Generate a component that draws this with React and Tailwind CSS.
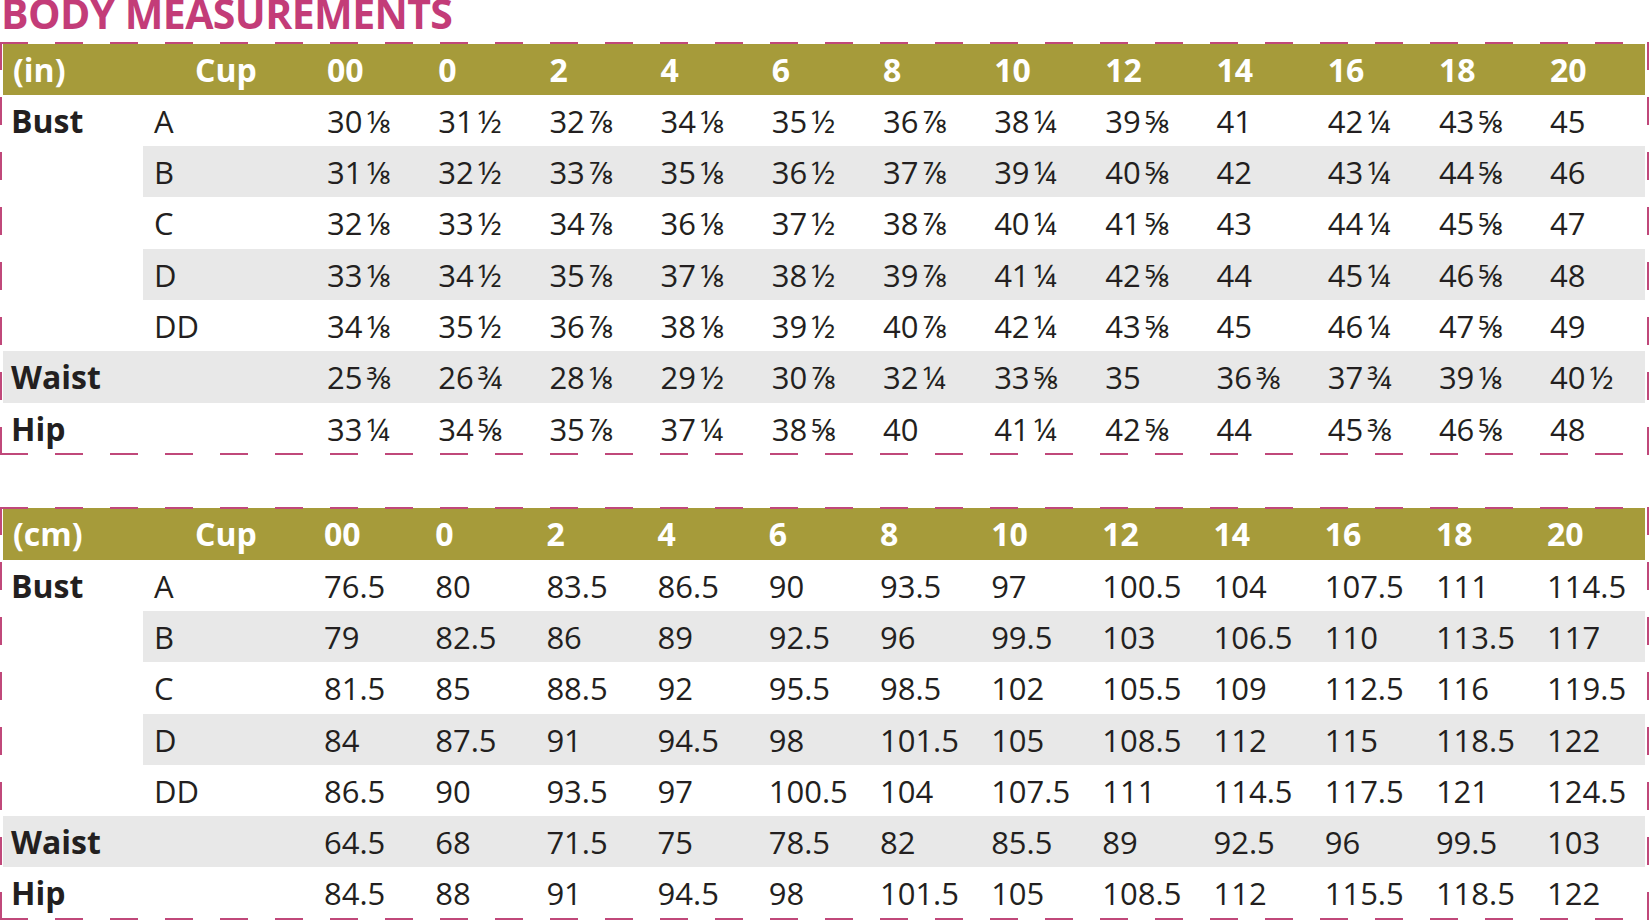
import React from 'react';

const SIZES = ['00', '0', '2', '4', '6', '8', '10', '12', '14', '16', '18', '20'];

const INCH_ROWS = [
  { label: 'Bust', cup: 'A', shade: 'none', values: ['30⅛', '31½', '32⅞', '34⅛', '35½', '36⅞', '38¼', '39⅝', '41', '42¼', '43⅝', '45'] },
  { label: '', cup: 'B', shade: 'cup', values: ['31⅛', '32½', '33⅞', '35⅛', '36½', '37⅞', '39¼', '40⅝', '42', '43¼', '44⅝', '46'] },
  { label: '', cup: 'C', shade: 'none', values: ['32⅛', '33½', '34⅞', '36⅛', '37½', '38⅞', '40¼', '41⅝', '43', '44¼', '45⅝', '47'] },
  { label: '', cup: 'D', shade: 'cup', values: ['33⅛', '34½', '35⅞', '37⅛', '38½', '39⅞', '41¼', '42⅝', '44', '45¼', '46⅝', '48'] },
  { label: '', cup: 'DD', shade: 'none', values: ['34⅛', '35½', '36⅞', '38⅛', '39½', '40⅞', '42¼', '43⅝', '45', '46¼', '47⅝', '49'] },
  { label: 'Waist', cup: '', shade: 'full', values: ['25⅜', '26¾', '28⅛', '29½', '30⅞', '32¼', '33⅝', '35', '36⅜', '37¾', '39⅛', '40½'] },
  { label: 'Hip', cup: '', shade: 'none', values: ['33¼', '34⅝', '35⅞', '37¼', '38⅝', '40', '41¼', '42⅝', '44', '45⅜', '46⅝', '48'] },
];

const CM_ROWS = [
  { label: 'Bust', cup: 'A', shade: 'none', values: ['76.5', '80', '83.5', '86.5', '90', '93.5', '97', '100.5', '104', '107.5', '111', '114.5'] },
  { label: '', cup: 'B', shade: 'cup', values: ['79', '82.5', '86', '89', '92.5', '96', '99.5', '103', '106.5', '110', '113.5', '117'] },
  { label: '', cup: 'C', shade: 'none', values: ['81.5', '85', '88.5', '92', '95.5', '98.5', '102', '105.5', '109', '112.5', '116', '119.5'] },
  { label: '', cup: 'D', shade: 'cup', values: ['84', '87.5', '91', '94.5', '98', '101.5', '105', '108.5', '112', '115', '118.5', '122'] },
  { label: '', cup: 'DD', shade: 'none', values: ['86.5', '90', '93.5', '97', '100.5', '104', '107.5', '111', '114.5', '117.5', '121', '124.5'] },
  { label: 'Waist', cup: '', shade: 'full', values: ['64.5', '68', '71.5', '75', '78.5', '82', '85.5', '89', '92.5', '96', '99.5', '103'] },
  { label: 'Hip', cup: '', shade: 'none', values: ['84.5', '88', '91', '94.5', '98', '101.5', '105', '108.5', '112', '115.5', '118.5', '122'] },
];

const COLS = 'grid grid-cols-[140px_181px_repeat(11,111.2px)_1fr]';

// "30⅛" -> whole number plus a fraction set a little apart
const Value = ({ text }) => {
  const m = text.match(/^(\d+)([¼½¾⅛⅜⅝⅞])$/);
  if (!m) return <>{text}</>;
  return (
    <>
      {m[1]}
      <span className="ml-[4px]">{m[2]}</span>
    </>
  );
};

const DashedFrame = () => (
  <>
    <div className="absolute left-0 right-0 top-0 h-[2px] bg-[repeating-linear-gradient(90deg,#c0487a_0_28px,transparent_28px_55px)]" />
    <div className="absolute left-0 right-0 bottom-0 h-[2px] bg-[repeating-linear-gradient(90deg,#c0487a_0_28px,transparent_28px_55px)]" />
    <div className="absolute left-0 top-0 bottom-0 w-[2px] bg-[repeating-linear-gradient(180deg,#c0487a_0_28px,transparent_28px_55px)]" />
    <div className="absolute right-[1px] top-0 bottom-0 w-[2px] bg-[repeating-linear-gradient(180deg,#c0487a_0_28px,transparent_28px_55px)]" />
  </>
);

const SizeTable = ({ unit, rows, inch }) => (
  <div className="relative pl-[3px] pr-[5px] pt-[1.5px]">
    {/* Header */}
    <div className={`${COLS} h-[51.3px] bg-[#a69b3a] text-white font-bold text-[32px] leading-none`}>
      <div className="pl-[10px] pt-[10px]">{unit}</div>
      <div className="pl-[52px] pt-[10px]">Cup</div>
      {SIZES.map(s => (
        <div key={s} className={`pt-[10px] ${inch ? 'pl-[3px]' : 'pl-0'}`}>{s}</div>
      ))}
    </div>

    {/* Rows */}
    {rows.map((r, i) => (
      <div
        key={i}
        className={`${COLS} h-[51.3px] text-[31px] leading-none text-[#231f20] ${r.shade === 'full' ? 'bg-[#e8e8e8]' : ''}`}
      >
        <div className="pl-[8px] pt-[10px] text-[32px] font-bold">{r.label}</div>
        <div className={`pl-[11px] pt-[11px] ${r.shade === 'cup' ? 'bg-[#e8e8e8]' : ''}`}>{r.cup}</div>
        {r.values.map((v, j) => (
          <div
            key={j}
            className={`pt-[11px] whitespace-nowrap ${inch ? 'pl-[3px]' : 'pl-0'} ${r.shade === 'cup' ? 'bg-[#e8e8e8]' : ''}`}
          >
            <Value text={v} />
          </div>
        ))}
      </div>
    ))}

    <div className="h-[1px]" />
    <DashedFrame />
  </div>
);

export default function App() {
  return (
    <div className="w-[1650px] h-[921px] overflow-hidden bg-white font-['Open_Sans','Noto_Sans',sans-serif]">
      {/* Title */}
      <div className="flex flex-col h-[42px] pl-[1px]">
        <h1 className="-mt-[7px] text-[41px] leading-none font-bold tracking-[-0.6px] text-[#c33c78] whitespace-nowrap">
          BODY MEASUREMENTS
        </h1>
      </div>

      <SizeTable unit="(in)" rows={INCH_ROWS} inch />

      <div className="h-[52px]" />

      <SizeTable unit="(cm)" rows={CM_ROWS} inch={false} />
    </div>
  );
}
